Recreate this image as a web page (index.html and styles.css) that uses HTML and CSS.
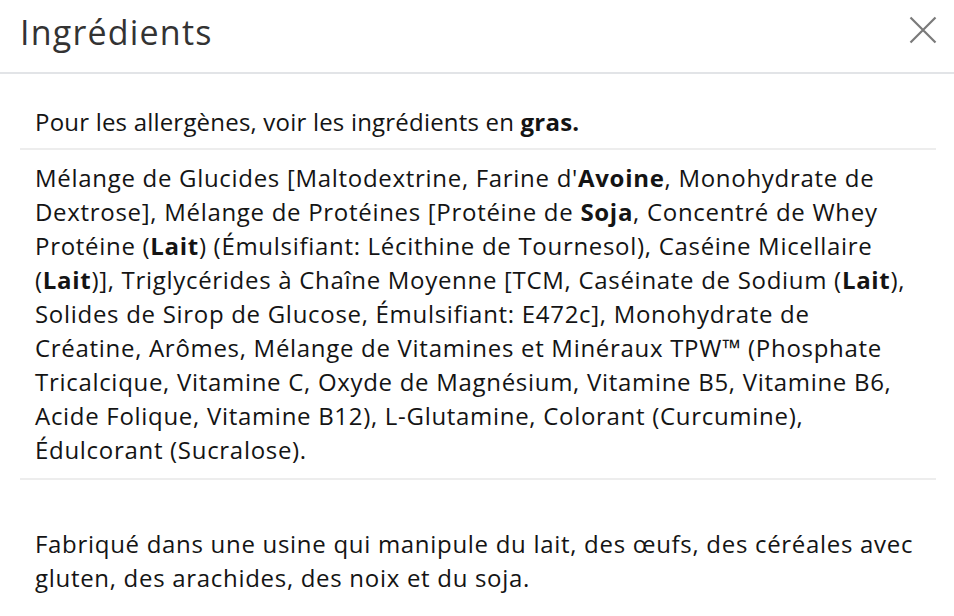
FILE: index.html
```html
<!DOCTYPE html>
<html lang="fr">
<head>
<meta charset="utf-8">
<title>Ingrédients</title>
<link rel="stylesheet" href="styles.css">
</head>
<body>
<div class="modal">
  <header class="modal-header">
    <h1 class="modal-title">Ingrédients</h1>
    <button class="close-btn" aria-label="Fermer">
      <svg width="28" height="28" viewBox="0 0 28 28"><path d="M1.5 1.5 L26.5 26.5 M26.5 1.5 L1.5 26.5" stroke="#7a7a7a" stroke-width="2.2" fill="none"/></svg>
    </button>
  </header>
  <div class="modal-body">
    <section class="block block-first">
      <p>Pour les allergènes, voir les ingrédients en <b>gras.</b></p>
    </section>
    <section class="block block-list">
      <p>Mélange de Glucides [Maltodextrine, Farine d'<b>Avoine</b>, Monohydrate de<br>
      Dextrose], Mélange de Protéines [Protéine de <b>Soja</b>, Concentré de Whey<br>
      Protéine (<b>Lait</b>) (Émulsifiant: Lécithine de Tournesol), Caséine Micellaire<br>
      (<b>Lait</b>)], Triglycérides à Chaîne Moyenne [TCM, Caséinate de Sodium (<b>Lait</b>),<br>
      Solides de Sirop de Glucose, Émulsifiant: E472c], Monohydrate de<br>
      Créatine, Arômes, Mélange de Vitamines et Minéraux TPW™ (Phosphate<br>
      Tricalcique, Vitamine C, Oxyde de Magnésium, Vitamine B5, Vitamine B6,<br>
      Acide Folique, Vitamine B12), L-Glutamine, Colorant (Curcumine),<br>
      Édulcorant (Sucralose).</p>
    </section>
    <section class="block block-last">
      <p>Fabriqué dans une usine qui manipule du lait, des œufs, des céréales avec gluten, des arachides, des noix et du soja.</p>
    </section>
  </div>
</div>
</body>
</html>
```
FILE: styles.css
```css
html, body {
  margin: 0;
  padding: 0;
  background: #fff;
}
.modal {
  width: 954px;
  font-family: "Open Sans", "Noto Sans", sans-serif;
  color: #141414;
}
.modal-header {
  height: 74px;
  box-sizing: border-box;
  display: flex;
  align-items: center;
  justify-content: space-between;
  padding: 0 17px 0 20px;
  border-bottom: 2px solid #e2e4e7;
}
.modal-title {
  margin: 0 0 8px;
  font-family: "Open Sans", sans-serif;
  font-weight: 500;
  font-size: 34px;
  line-height: 40px;
  color: #333;
  letter-spacing: 1.2px;
}
.close-btn {
  border: 0;
  background: none;
  padding: 0;
  margin: 0 0 12px;
  width: 28px;
  height: 28px;
  display: flex;
  cursor: pointer;
}
.modal-body {
  padding: 0 18px 0 20px;
}
.block {
  padding: 0 15px;
}
.block p {
  margin: 0;
  font-size: 24px;
  line-height: 34px;
  letter-spacing: 0.7px;
}
.block-first p {
  letter-spacing: 0.2px;
}
.block-first {
  padding-top: 31px;
  padding-bottom: 9px;
  border-bottom: 2px solid #ededed;
}
.block-list {
  padding-top: 11px;
  padding-bottom: 11px;
  border-bottom: 2px solid #ededed;
}
.block-last {
  padding-top: 47px;
}
b {
  font-weight: 700;
}
```
